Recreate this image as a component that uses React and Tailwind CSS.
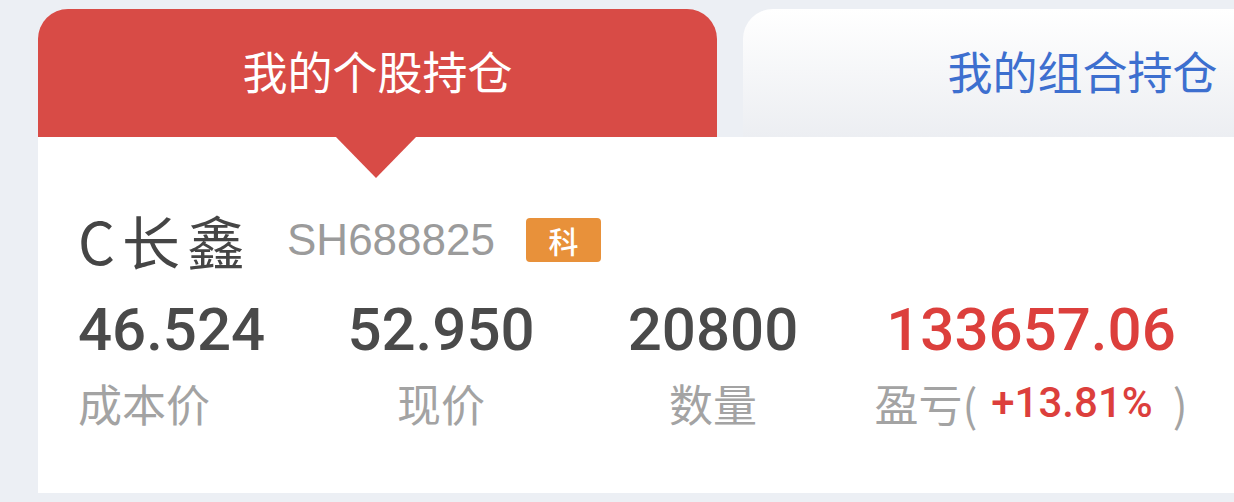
import React from 'react';

const cjk = "font-['Noto_Sans_CJK_SC',sans-serif]";
const num = "font-['Roboto','Noto_Sans_CJK_SC',sans-serif]";

const holding = {
  name: 'C长鑫',
  code: 'SH688825',
  board: '科',
  cost: '46.524',
  price: '52.950',
  qty: '20800',
  profit: '133657.06',
  rate: '+13.81%',
};

const Tabs = () => (
  <div className="flex gap-[26px] pl-[38px] pt-[9px]">
    <div className="relative flex h-[128px] w-[679px] shrink-0 items-center justify-center rounded-t-[30px] bg-[#d84b46] pb-[6px]">
      <span className={`${cjk} text-[45px] leading-none text-white`}>我的个股持仓</span>
      {/* little arrow under the active tab */}
      <div className="absolute left-[297px] top-[127px] h-0 w-0 border-x-[41px] border-t-[42px] border-x-transparent border-t-[#d84b46]" />
    </div>
    <div className="flex h-[128px] w-[679px] shrink-0 items-center justify-center rounded-t-[30px] bg-gradient-to-b from-white to-[#eceef2] pb-[6px]">
      <span className={`${cjk} text-[45px] leading-none text-[#3d6fcf]`}>我的组合持仓</span>
    </div>
  </div>
);

const Stat = ({ value, label, className = '', valueClass = 'text-[#4a4a4a]' }) => (
  <div className={`flex flex-col ${className}`}>
    <span className={`${num} text-[60px] font-medium leading-[60px] ${valueClass}`}>{value}</span>
    <span className={`${cjk} mt-[21px] text-[44px] leading-none text-[#a3a3a3]`}>{label}</span>
  </div>
);

export default function App() {
  return (
    <div className="h-[502px] w-[1234px] overflow-hidden bg-[#eceff4]">
      <Tabs />
      <div className="ml-[38px] h-[356px] bg-white pl-[40px] pt-[73px]">
        <div className="flex h-[60px] items-center">
          <span className={`${cjk} text-[58px] tracking-[7px] leading-none text-[#454545]`}>{holding.name}</span>
          <span className="ml-[35px] font-['Liberation_Sans',sans-serif] text-[44px] leading-none text-[#9b9b9b]">
            {holding.code}
          </span>
          <span className={`${cjk} ml-[31px] flex h-[44px] w-[75px] items-center justify-center rounded-[4px] bg-[#e8913a] text-[30px] font-medium leading-none text-white`}>
            {holding.board}
          </span>
        </div>
        <div className="mt-[30px] flex">
          <Stat value={holding.cost} label="成本价" className="w-[185px] items-start" />
          <Stat value={holding.price} label="现价" className="ml-[78px] w-[200px] items-center" />
          <Stat value={holding.qty} label="数量" className="ml-[72px] w-[200px] items-center" />
          <Stat
            value={holding.profit}
            valueClass="text-[#dc3f3c]"
            className="ml-[48px] w-[340px] items-center"
            label={
              <span className="flex items-center">
                盈亏(
                <span className={`${num} ml-[14px] mr-[20px] text-[42px] font-medium text-[#dc3f3c]`}>{holding.rate}</span>)
              </span>
            }
          />
        </div>
      </div>
    </div>
  );
}
